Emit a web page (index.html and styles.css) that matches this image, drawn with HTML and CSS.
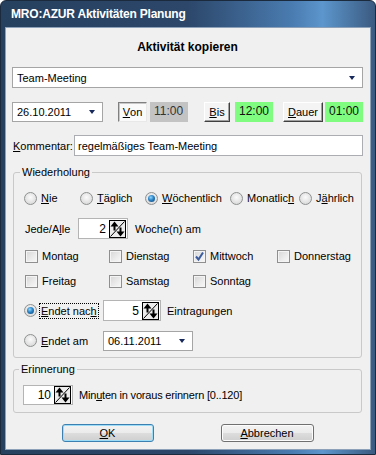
FILE: index.html
```html
<!DOCTYPE html>
<html lang="de">
<head>
  <meta charset="UTF-8">
  <title>MRO:AZUR Aktivitäten Planung</title>
  <link rel="stylesheet" href="styles.css">
</head>
<body>
  <div class="window">
    <div class="titlebar">MRO:AZUR Aktivitäten Planung</div>

    <div class="client">
      <div class="heading">Aktivität kopieren</div>

      <div class="combo combo-type">
        <span class="value">Team-Meeting</span>
        <span class="arrow"></span>
      </div>

      <div class="time-row">
        <div class="combo combo-date">
          <span class="value">26.10.2011</span>
          <span class="arrow"></span>
        </div>
        <div class="time-pair pair-von">
          <span class="btn3d pressed btn-von"><u>V</u>on</span>
          <span class="time time-off">11:00</span>
        </div>
        <div class="time-pair pair-bis">
          <span class="btn3d btn-bis"><u>B</u>is</span>
          <span class="time time-on">12:00</span>
        </div>
        <div class="time-pair pair-dauer">
          <span class="btn3d btn-dauer"><u>D</u>auer</span>
          <span class="time time-on">01:00</span>
        </div>
      </div>

      <div class="comment-row">
        <span class="comment-label"><u>K</u>ommentar:</span>
        <div class="textbox">regelmäßiges Team-Meeting</div>
      </div>

      <fieldset class="group group-repeat">
        <legend>Wiederholung</legend>

        <div class="radio-row">
          <span class="option"><span class="radio"></span><span><u>N</u>ie</span></span>
          <span class="option"><span class="radio"></span><span><u>T</u>äglich</span></span>
          <span class="option"><span class="radio checked"></span><span><u>W</u>öchentlich</span></span>
          <span class="option"><span class="radio"></span><span>Monatlic<u>h</u></span></span>
          <span class="option"><span class="radio"></span><span>J<u>ä</u>hrlich</span></span>
        </div>

        <div class="every-row">
          <span class="every-label">Jede/A<u>l</u>le</span>
          <div class="spin spin-weeks">
            <span>2</span>
            <svg class="spin-icon" width="17" height="18" viewBox="0 0 17 18">
              <rect x="0.5" y="0.5" width="16" height="17" fill="#ececec" stroke="#000"/>
              <path d="M1.5 16.5 L15.5 1.5" stroke="#000" fill="none"/>
              <path d="M5.5 1.5 L1.5 6.5 H4.5 V10.5 H6.5 V6.5 H9.5 Z" fill="#000"/>
              <path d="M11.5 16.5 L7.5 11.5 H10.5 V7.5 H12.5 V11.5 H15.5 Z" fill="#000"/>
            </svg>
          </div>
          <span class="every-unit">Woche(n) am</span>
        </div>

        <div class="day-grid">
          <span class="option"><span class="check"></span><span>Montag</span></span>
          <span class="option"><span class="check"></span><span>Dienstag</span></span>
          <span class="option">
            <span class="check">
              <svg width="11" height="11" viewBox="0 0 11 11"><path d="M2 5.5 L4.5 8.5 L9 1.5" stroke="#3b5c9e" stroke-width="2" fill="none"/></svg>
            </span>
            <span>Mittwoch</span>
          </span>
          <span class="option"><span class="check"></span><span>Donnerstag</span></span>
        </div>

        <div class="day-grid day-grid-second">
          <span class="option"><span class="check"></span><span>Freitag</span></span>
          <span class="option"><span class="check"></span><span>Samstag</span></span>
          <span class="option"><span class="check"></span><span>Sonntag</span></span>
        </div>

        <div class="ends-row">
          <span class="ends-label ends-focus">
            <span class="radio checked"></span>
            <span class="focus"><u>E</u>ndet nac<u>h</u></span>
          </span>
          <div class="spin spin-count">
            <span>5</span>
            <svg class="spin-icon" width="17" height="18" viewBox="0 0 17 18">
              <rect x="0.5" y="0.5" width="16" height="17" fill="#ececec" stroke="#000"/>
              <path d="M1.5 16.5 L15.5 1.5" stroke="#000" fill="none"/>
              <path d="M5.5 1.5 L1.5 6.5 H4.5 V10.5 H6.5 V6.5 H9.5 Z" fill="#000"/>
              <path d="M11.5 16.5 L7.5 11.5 H10.5 V7.5 H12.5 V11.5 H15.5 Z" fill="#000"/>
            </svg>
          </div>
          <span class="ends-unit">Eintragungen</span>
        </div>

        <div class="ends-row ends-row-date">
          <span class="ends-label">
            <span class="radio"></span>
            <span><u>E</u>ndet am</span>
          </span>
          <div class="combo combo-end">
            <span class="value">06.11.2011</span>
            <span class="arrow"></span>
          </div>
        </div>
      </fieldset>

      <fieldset class="group group-remind">
        <legend>Erinnerung</legend>
        <div class="remind-row">
          <div class="spin spin-remind">
            <span>10</span>
            <svg class="spin-icon" width="17" height="18" viewBox="0 0 17 18">
              <rect x="0.5" y="0.5" width="16" height="17" fill="#ececec" stroke="#000"/>
              <path d="M1.5 16.5 L15.5 1.5" stroke="#000" fill="none"/>
              <path d="M5.5 1.5 L1.5 6.5 H4.5 V10.5 H6.5 V6.5 H9.5 Z" fill="#000"/>
              <path d="M11.5 16.5 L7.5 11.5 H10.5 V7.5 H12.5 V11.5 H15.5 Z" fill="#000"/>
            </svg>
          </div>
          <span class="remind-text">Min<u>u</u>ten in voraus erinnern [0..120]</span>
        </div>
      </fieldset>

      <div class="actions">
        <button class="button button-ok" type="button"><u>O</u>K</button>
        <button class="button button-cancel" type="button"><u>A</u>bbrechen</button>
      </div>
    </div>
  </div>
</body>
</html>
```

FILE: styles.css
```css
body {
  margin: 0;
  padding: 0;
  font-family: "Liberation Sans", Arial, sans-serif;
  font-size: 11px;
  color: #000;
  background: #fff;
}
u {
  text-decoration: underline;
  text-underline-offset: 1px;
}
.window {
  width: 376px;
  height: 455px;
  box-sizing: border-box;
  border: 1px solid #1b2a3d;
  border-radius: 6px 6px 0 0;
  padding: 0 4px 4px;
  display: flex;
  flex-direction: column;
  background: linear-gradient(to right, #26405f 0%, #2c476a 50%, #4a7cb1 78%, #5c96cc 86%, #3b5a80 100%);
}
.titlebar {
  height: 26px;
  line-height: 26px;
  padding-left: 6px;
  color: #fff;
  font-weight: bold;
  font-size: 12px;
  letter-spacing: -0.2px;
}
.client {
  flex: 1;
  background: #f0f0f0;
  border: 1px solid #8da2b9;
  padding: 11px 7px 0 6px;
}
.heading {
  text-align: center;
  font-weight: bold;
  font-size: 12px;
  line-height: 16px;
}

/* combo boxes */
.combo {
  box-sizing: border-box;
  height: 21px;
  background: #fff;
  border: 1px solid #a5a5a5;
  display: flex;
  align-items: center;
  justify-content: space-between;
  padding: 0 7px 0 4px;
}
.combo .arrow {
  width: 0;
  height: 0;
  border-left: 3.5px solid transparent;
  border-right: 3.5px solid transparent;
  border-top: 4px solid #17285a;
}
.combo-type {
  margin-top: 12px;
}
.combo-date {
  width: 91px;
  height: 20px;
}

/* time row */
.time-row {
  display: flex;
  align-items: center;
  margin-top: 14px;
  height: 20px;
}
.time-pair {
  display: flex;
  height: 20px;
}
.pair-von {
  margin-left: 15px;
  gap: 3px;
}
.pair-bis {
  margin-left: 16px;
  gap: 5px;
}
.pair-dauer {
  margin-left: 10px;
  gap: 2px;
}
.btn3d {
  box-sizing: border-box;
  height: 20px;
  display: flex;
  align-items: center;
  justify-content: center;
  background: #f4f4f4;
  border: 1px solid;
  border-color: #fff #404040 #404040 #fff;
  box-shadow: inset -1px -1px #a0a0a0;
}
.btn3d.pressed {
  background: #fafafa;
  border-color: #808080 #e8e8e8 #e8e8e8 #808080;
  box-shadow: inset 1px 1px #c8c8c8;
}
.btn-von {
  width: 29px;
}
.btn-bis {
  width: 26px;
}
.btn-dauer {
  width: 40px;
}
.time {
  box-sizing: border-box;
  width: 38px;
  height: 20px;
  padding: 0 0 2px 4px;
  display: flex;
  align-items: center;
  font-size: 12px;
}
.time-off {
  background: #c3c3c3;
  color: #333;
}
.time-on {
  background: #80fc80;
  color: #111;
}

/* comment */
.comment-row {
  display: flex;
  align-items: center;
  margin-top: 13px;
  height: 21px;
}
.comment-label {
  width: 61px;
  padding-left: 1px;
}
.textbox {
  flex: 1;
  box-sizing: border-box;
  height: 21px;
  background: #fff;
  border: 1px solid #abadb3;
  padding-left: 3px;
  display: flex;
  align-items: center;
}

/* group boxes */
.group {
  margin: 10px 1px 0;
  border: 1px solid #c9c9c9;
  border-radius: 3px;
  padding: 0 9px 6px 10px;
  min-width: 0;
}
.group legend {
  padding: 0 2px;
  margin-left: -4px;
  line-height: 13px;
}
.group-remind {
  margin-top: 5px;
  padding: 0 9px 7px 9px;
}

.option {
  display: flex;
  align-items: center;
  gap: 4px;
}
.radio {
  box-sizing: border-box;
  width: 13px;
  height: 13px;
  border-radius: 50%;
  border: 1px solid #8f9091;
  background: radial-gradient(circle at 50% 40%, #fbfbfb 0%, #e2e2e2 60%, #cfcfcf 100%);
  display: flex;
  align-items: center;
  justify-content: center;
  flex: none;
}
.radio.checked::after {
  content: "";
  width: 7px;
  height: 7px;
  border-radius: 50%;
  background: radial-gradient(circle at 40% 35%, #8fd7ff 0%, #2a82c4 45%, #0d3f6e 100%);
}
.check {
  box-sizing: border-box;
  width: 13px;
  height: 13px;
  border: 1px solid #8f8f8f;
  background: linear-gradient(135deg, #d6d6d6 0%, #ececec 60%, #f8f8f8 100%);
  box-shadow: inset 0 0 0 1px #f4f4f4;
  display: flex;
  align-items: center;
  justify-content: center;
  flex: none;
}

.radio-row {
  display: grid;
  grid-template-columns: 56px 65px 85px 69px auto;
  align-items: center;
  height: 20px;
  margin-top: 9px;
}
.every-row {
  display: flex;
  align-items: center;
  height: 21px;
  margin-top: 10px;
  padding-left: 1px;
}
.every-label {
  width: 53px;
}
.spin {
  box-sizing: border-box;
  height: 21px;
  background: #fff;
  border: 1px solid #b4b4b4;
  display: flex;
  align-items: center;
  justify-content: flex-end;
  padding-right: 1px;
  font-size: 12px;
}
.spin-icon {
  margin-left: 3px;
}
.spin-weeks {
  width: 50px;
}
.every-unit {
  margin-left: 7px;
}
.day-grid {
  display: grid;
  grid-template-columns: repeat(4, 84px);
  align-items: center;
  height: 16px;
  margin-top: 9px;
  padding-left: 1px;
}
.ends-row {
  display: flex;
  align-items: center;
  height: 21px;
  margin-top: 11px;
}
.ends-row-date {
  margin-top: 9px;
}
.ends-label {
  width: 79px;
  display: flex;
  align-items: center;
  gap: 4px;
  flex: none;
}
.ends-focus {
  gap: 2px;
}
.focus {
  border: 1px dotted #000;
  padding: 0 1px;
  line-height: 14px;
}
.spin-count {
  width: 58px;
}
.ends-unit {
  margin-left: 6px;
}
.combo-end {
  width: 90px;
  height: 20px;
}
.remind-row {
  display: flex;
  align-items: center;
  height: 20px;
  margin-top: 9px;
}
.spin-remind {
  width: 50px;
  height: 20px;
}
.remind-text {
  margin-left: 6px;
  letter-spacing: -0.2px;
}

/* dialog buttons */
.actions {
  display: flex;
  justify-content: center;
  gap: 67px;
  margin-top: 11px;
}
.button {
  box-sizing: border-box;
  height: 18px;
  padding: 0;
  font-family: "Liberation Sans", Arial, sans-serif;
  font-size: 11px;
  color: #000;
  border: 1px solid #707070;
  border-radius: 3px;
  background: linear-gradient(#f3f3f3 0%, #ebebeb 50%, #dddddd 51%, #cfcfcf 100%);
  box-shadow: inset 0 0 0 1px #fcfcfc;
}
.button-ok {
  width: 92px;
  border-color: #3c7fb1;
  box-shadow: inset 0 0 0 1px #9ddcf6;
}
.button-cancel {
  width: 93px;
}
```
